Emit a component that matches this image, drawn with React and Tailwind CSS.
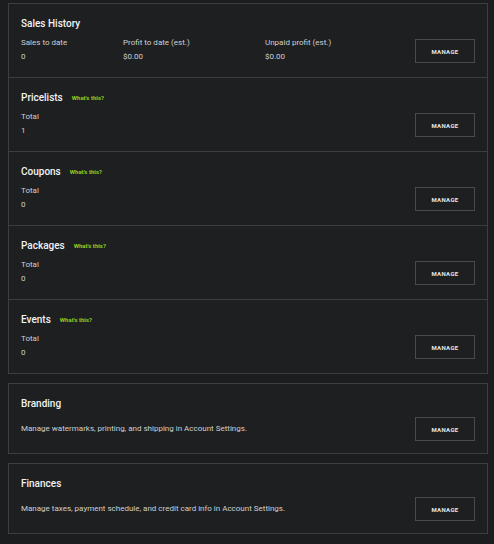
import React from "react";

const font = { fontFamily: "Roboto, 'Liberation Sans', sans-serif" };

function ManageButton() {
  return (
    <button className="flex h-6 w-[60px] shrink-0 items-center justify-center border border-[#4a4a4c] bg-transparent text-[6px] font-bold uppercase tracking-[0.06em] text-[#e6e6e6]">
      Manage
    </button>
  );
}

function Title({ children, whats }) {
  return (
    <div className="flex h-4 items-center">
      <span className="text-[10px] font-medium leading-4 text-[#f2f2f2]">{children}</span>
      {whats && (
        <span className="ml-[9px] text-[6px] font-bold leading-4 text-[#8fcf1f]">What's this?</span>
      )}
    </div>
  );
}

function Stat({ label, value, w }) {
  return (
    <div className={`${w} flex flex-col`}>
      <span className="text-[8px] leading-[14px] text-[#cfcfcf]">{label}</span>
      <span className="text-[8px] leading-[14px] text-[#cfcfcf]">{value}</span>
    </div>
  );
}

function Row({ title, whats, children, last }) {
  return (
    <div className={`flex items-end justify-between px-3 pb-[14px] pt-3 ${last ? "" : "border-b border-[#3e3e40]"}`}>
      <div className="flex flex-col">
        <Title whats={whats}>{title}</Title>
        <div className="mt-1 mb-[-1px] flex">{children}</div>
      </div>
      <ManageButton />
    </div>
  );
}

function InfoCard({ title, desc }) {
  return (
    <div className="border border-[#3e3e40] bg-[#1e1f21] px-3 py-3">
      <Title>{title}</Title>
      <div className="mt-[5px] flex items-center justify-between">
        <span className="text-[8px] leading-[14px] text-[#cfcfcf]">{desc}</span>
        <ManageButton />
      </div>
    </div>
  );
}

export default function App() {
  return (
    <div className="min-h-[544px] w-[494px] bg-[#1c1d1f] pb-[10px] pl-2 pr-[6px] pt-[3px]" style={font}>
      <div className="flex flex-col gap-[9px]">
        <div className="border border-[#3e3e40] bg-[#1e1f21]">
          <Row title="Sales History">
            <Stat label="Sales to date" value="0" w="w-[102px]" />
            <Stat label="Profit to date (est.)" value="$0.00" w="w-[142px]" />
            <Stat label="Unpaid profit (est.)" value="$0.00" w="w-[120px]" />
          </Row>
          <Row title="Pricelists" whats>
            <Stat label="Total" value="1" w="w-[100px]" />
          </Row>
          <Row title="Coupons" whats>
            <Stat label="Total" value="0" w="w-[100px]" />
          </Row>
          <Row title="Packages" whats>
            <Stat label="Total" value="0" w="w-[100px]" />
          </Row>
          <Row title="Events" whats last>
            <Stat label="Total" value="0" w="w-[100px]" />
          </Row>
        </div>
        <InfoCard title="Branding" desc="Manage watermarks, printing, and shipping in Account Settings." />
        <InfoCard title="Finances" desc="Manage taxes, payment schedule, and credit card info in Account Settings." />
      </div>
    </div>
  );
}
